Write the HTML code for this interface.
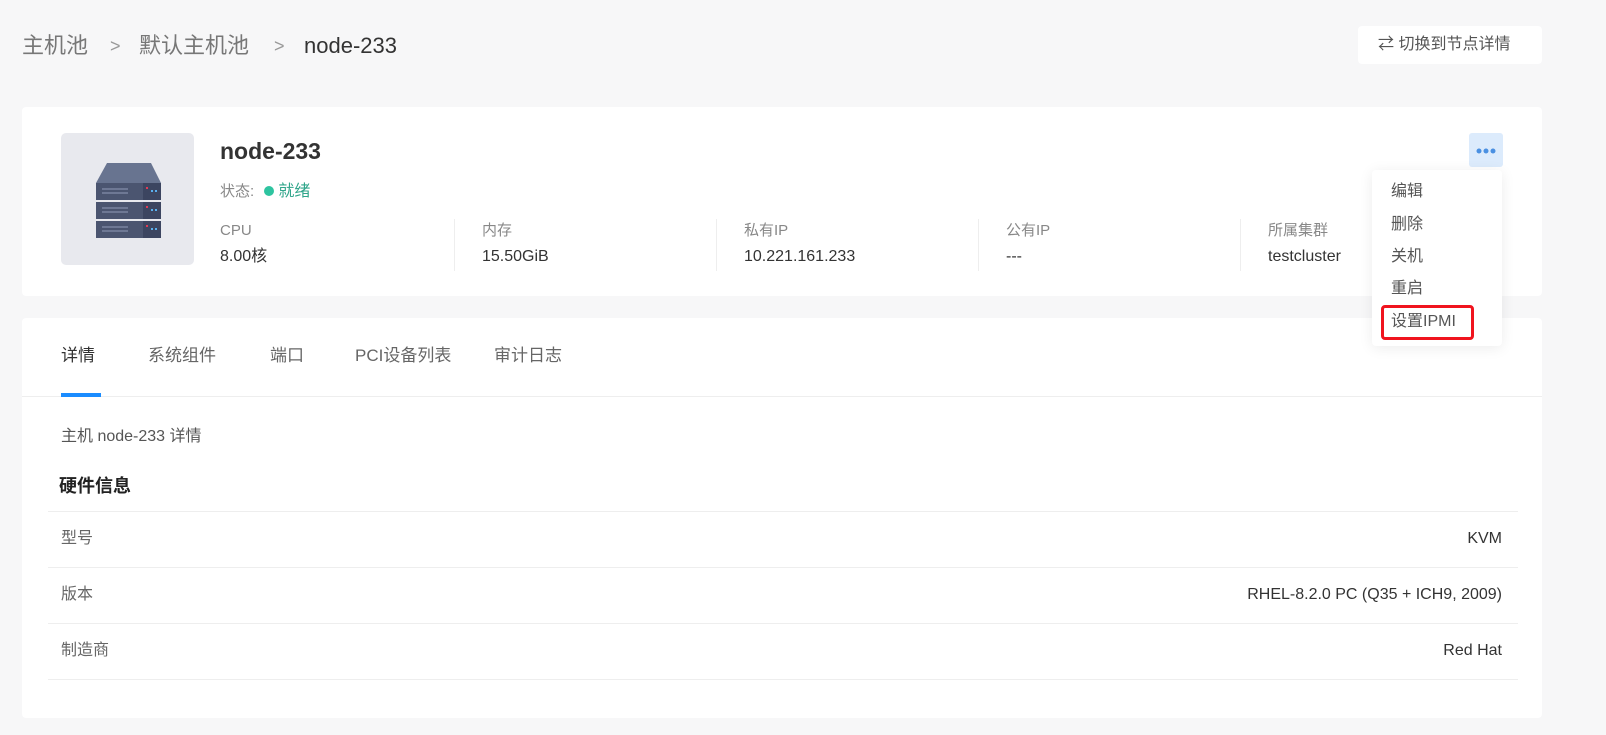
<!DOCTYPE html>
<html><head><meta charset="utf-8"><style>
*{margin:0;padding:0;box-sizing:border-box}
body{width:1606px;height:697px;overflow:hidden;background:#f7f7f8;font-family:"Liberation Sans","Noto Sans CJK SC",sans-serif;color:#333;position:relative}
.a{position:absolute;white-space:nowrap;line-height:20px}
.card{position:absolute;background:#fff;border-radius:4px}
.lbl{font-size:15px;color:#888}
.val{font-size:16px;color:#333}
.sep{position:absolute;width:1px;height:52px;background:#eee;top:219px}
.row{position:absolute;left:48px;width:1470px;border-top:1px solid #eee;height:56px}
</style></head><body>
<div class="a" style="left:22px;top:31px;font-size:22px;line-height:30px;color:#777">主机池</div>
<div class="a" style="left:110px;top:31px;font-size:18px;line-height:30px;color:#999">&gt;</div>
<div class="a" style="left:139px;top:31px;font-size:22px;line-height:30px;color:#777">默认主机池</div>
<div class="a" style="left:274px;top:31px;font-size:18px;line-height:30px;color:#999">&gt;</div>
<div class="a" style="left:304px;top:31px;font-size:22px;line-height:30px;color:#333">node-233</div>
<div class="a" style="left:1358px;top:26px;width:184px;height:38px;background:#fff;border-radius:4px;font-size:16px;color:#555;line-height:38px;padding-left:20px">⇄ 切换到节点详情</div>

<div class="card" style="left:22px;top:107px;width:1520px;height:189px"></div>
<div class="a" style="left:61px;top:133px;width:133px;height:132px;background:#e8e9ee;border-radius:5px">
<svg width="133" height="132" viewBox="0 0 133 132">
<path d="M46 30 L90 30 L100 50 L35 50 Z" fill="#687490"/>
<rect x="35" y="50" width="65" height="17" fill="#4b5570"/><rect x="82" y="50" width="18" height="17" fill="#3c4560"/>
<rect x="35" y="69" width="65" height="17" fill="#4b5570"/><rect x="82" y="69" width="18" height="17" fill="#3c4560"/>
<rect x="35" y="88" width="65" height="17" fill="#4b5570"/><rect x="82" y="88" width="18" height="17" fill="#3c4560"/>
<g fill="#e23b55"><rect x="85" y="54" width="2" height="2"/><rect x="85" y="73" width="2" height="2"/><rect x="85" y="92" width="2" height="2"/></g>
<g fill="#5ab0ee"><rect x="90" y="57" width="2" height="2"/><rect x="94" y="57" width="2" height="2"/><rect x="90" y="76" width="2" height="2"/><rect x="94" y="76" width="2" height="2"/><rect x="90" y="95" width="2" height="2"/><rect x="94" y="95" width="2" height="2"/></g>
<g stroke="#7a84a0" stroke-width="1.5"><path d="M41 56h26M41 60h26M41 75h26M41 79h26M41 94h26M41 98h26"/></g>
</svg></div>
<div class="a" style="left:220px;top:136px;font-size:23px;line-height:30px;font-weight:bold;color:#333">node-233</div>
<div class="a" style="left:220px;top:182px;font-size:15px;color:#888">状态: <span style="display:inline-block;width:10px;height:10px;border-radius:50%;background:#2ec4a0;margin:0 4px 0 6px"></span><span style="color:#2fa58a;font-size:16px">就绪</span></div>
<div class="a lbl" style="left:220px;top:221px">CPU</div><div class="a val" style="left:220px;top:247px">8.00核</div>
<div class="sep" style="left:454px"></div>
<div class="a lbl" style="left:482px;top:221px">内存</div><div class="a val" style="left:482px;top:247px">15.50GiB</div>
<div class="sep" style="left:716px"></div>
<div class="a lbl" style="left:744px;top:221px">私有IP</div><div class="a val" style="left:744px;top:247px">10.221.161.233</div>
<div class="sep" style="left:978px"></div>
<div class="a lbl" style="left:1006px;top:221px">公有IP</div><div class="a val" style="left:1006px;top:247px">---</div>
<div class="sep" style="left:1240px"></div>
<div class="a lbl" style="left:1268px;top:221px">所属集群</div><div class="a val" style="left:1268px;top:247px">testcluster</div>

<div class="card" style="left:22px;top:318px;width:1520px;height:400px"></div>
<div class="a" style="left:22px;top:396px;width:1520px;height:1px;background:#eee"></div>
<div class="a" style="left:61px;top:344px;font-size:17px;line-height:24px;color:#333">详情</div>
<div class="a" style="left:61px;top:393px;width:40px;height:4px;background:#1a8cff"></div>
<div class="a" style="left:148px;top:344px;font-size:17px;line-height:24px;color:#666">系统组件</div>
<div class="a" style="left:270px;top:344px;font-size:17px;line-height:24px;color:#666">端口</div>
<div class="a" style="left:355px;top:344px;font-size:17px;line-height:24px;color:#666">PCI设备列表</div>
<div class="a" style="left:494px;top:344px;font-size:17px;line-height:24px;color:#666">审计日志</div>
<div class="a" style="left:61px;top:427px;font-size:16px;color:#555">主机 node-233 详情</div>
<div class="a" style="left:59px;top:475px;font-size:18px;line-height:22px;font-weight:bold;color:#222">硬件信息</div>
<div class="row" style="top:511px"></div><div class="a" style="left:61px;top:529px;font-size:16px;color:#666">型号</div><div class="a" style="right:104px;top:529px;font-size:16px;color:#333">KVM</div>
<div class="row" style="top:567px"></div><div class="a" style="left:61px;top:585px;font-size:16px;color:#666">版本</div><div class="a" style="right:104px;top:585px;font-size:16px;color:#333">RHEL-8.2.0 PC (Q35 + ICH9, 2009)</div>
<div class="row" style="top:623px"></div><div class="a" style="left:61px;top:641px;font-size:16px;color:#666">制造商</div><div class="a" style="right:104px;top:641px;font-size:16px;color:#333">Red Hat</div>
<div class="row" style="top:679px"></div>

<div class="a" style="left:1469px;top:133px;width:34px;height:34px;background:#dcebfc;border-radius:3px">
<svg width="34" height="34"><g fill="#4a90e2"><circle cx="10" cy="18" r="2.5"/><circle cx="17" cy="18" r="2.5"/><circle cx="24" cy="18" r="2.5"/></g></svg></div>
<div class="a" style="left:1372px;top:170px;width:130px;height:176px;background:#fff;border-radius:4px;box-shadow:0 2px 14px rgba(0,0,0,.08)"></div>
<div class="a" style="left:1391px;top:182px;font-size:16px;color:#555">编辑</div>
<div class="a" style="left:1391px;top:215px;font-size:16px;color:#555">删除</div>
<div class="a" style="left:1391px;top:247px;font-size:16px;color:#555">关机</div>
<div class="a" style="left:1391px;top:279px;font-size:16px;color:#555">重启</div>
<div class="a" style="left:1381px;top:305px;width:93px;height:35px;border:3px solid #f0141e;border-radius:4px"></div>
<div class="a" style="left:1391px;top:312px;font-size:16px;color:#555">设置IPMI</div>
</body></html>
